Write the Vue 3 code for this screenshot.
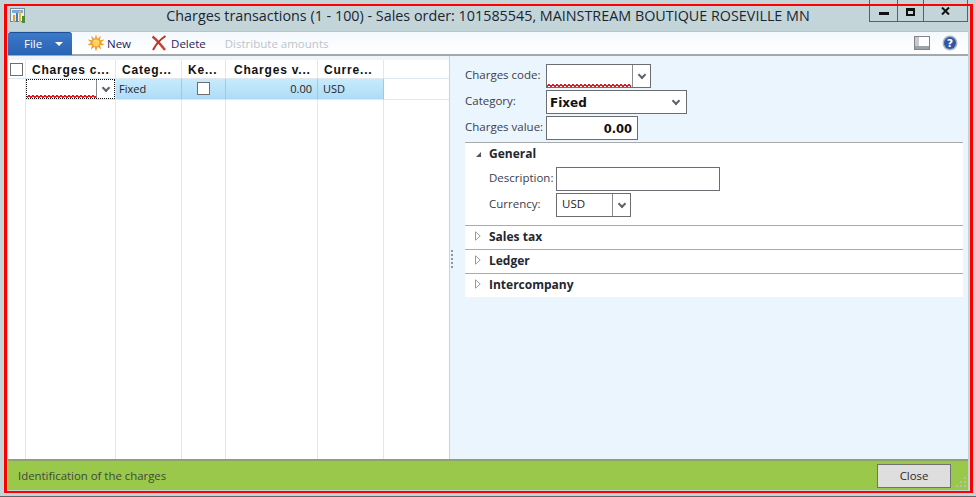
<template>
  <div class="window">
    <!-- Title bar -->
    <header class="titlebar">
      <svg class="app-icon" width="16" height="16" viewBox="0 0 16 16">
        <rect x="0.5" y="0.5" width="14" height="13" fill="#e8f0f6" stroke="#7a8a96" />
        <rect x="2" y="2" width="11" height="3" fill="#7fa8d8" />
        <rect x="3" y="7" width="2" height="7" fill="#e8a020" />
        <rect x="6" y="5" width="2" height="9" fill="#3f7fc0" />
        <rect x="9" y="3" width="2" height="11" fill="#e0c030" />
        <rect x="12" y="8" width="3" height="7" fill="#4a8a40" />
      </svg>
      <span class="title">Charges transactions (1 - 100) - Sales order: 101585545, MAINSTREAM BOUTIQUE ROSEVILLE MN</span>
      <div class="win-buttons">
        <div class="win-btn btn-min"><span class="min-bar"></span></div>
        <div class="win-btn btn-max"><span class="max-box"></span></div>
        <div class="win-btn btn-close">
          <svg width="9" height="8" viewBox="0 0 9 8">
            <path d="M1 0.5 L8 7.5 M8 0.5 L1 7.5" stroke="#111" stroke-width="2" fill="none" />
          </svg>
        </div>
      </div>
    </header>

    <!-- Toolbar -->
    <div class="toolbar">
      <button class="file-btn">File<span class="file-caret"></span></button>
      <div class="tool tool-new">
        <svg width="18" height="18" viewBox="0 0 18 18">
          <path d="M9 0.5 L10.4 5 L13.8 1.8 L12.8 6.2 L17.4 5.4 L14 8.6 L17.6 11 L13 11.2 L14.2 15.6 L10.6 12.8 L9 17.4 L7.4 12.8 L3.8 15.6 L5 11.2 L0.4 11 L4 8.6 L0.6 5.4 L5.2 6.2 L4.2 1.8 L7.6 5 Z" fill="#f0a030" />
          <circle cx="9" cy="8.8" r="3.4" fill="#fbd667" />
        </svg>
        <span>New</span>
      </div>
      <div class="tool tool-delete">
        <svg width="16" height="16" viewBox="0 0 16 16">
          <path d="M1.5 1.5 C6 5 10 10 14 15" stroke="#c8402c" stroke-width="2.4" fill="none" />
          <path d="M14.5 1 C10 4 5 9 2 15" stroke="#b83424" stroke-width="2" fill="none" />
        </svg>
        <span>Delete</span>
      </div>
      <div class="tool tool-disabled">Distribute amounts</div>
      <div class="toolbar-right">
        <svg width="16" height="14" viewBox="0 0 16 14">
          <rect x="0.5" y="0.5" width="15" height="13" fill="#fff" stroke="#808488" />
          <rect x="1" y="10" width="14" height="3" fill="#9aa4a8" />
          <rect x="1" y="1" width="4" height="9" fill="#c4ccd0" />
        </svg>
        <svg width="16" height="16" viewBox="0 0 16 16">
          <circle cx="8" cy="8" r="7.5" fill="#aab4c0" />
          <circle cx="8" cy="8" r="6" fill="#2f55a8" />
          <text x="8" y="12" class="help-mark" text-anchor="middle">?</text>
        </svg>
      </div>
    </div>

    <div class="body">
      <!-- Grid on the left -->
      <section class="grid-pane">
        <div class="grid">
          <div v-for="col in columns" :key="col.key" class="col" :class="col.key" :style="{ width: col.width + 'px' }">
            <div class="col-head">
              <span v-if="col.key === 'c-mark'" class="check"></span>
              <template v-else>{{ col.title }}</template>
            </div>
            <div class="col-cell" :class="{ selected: col.selected }">
              <div v-if="col.key === 'c-code'" class="code-cell">
                <div class="code-input">
                  <svg class="squiggle" width="70" height="3" shape-rendering="crispEdges">
                    <polyline :points="squiggle(70)" fill="none" stroke="#e8181c" />
                  </svg>
                </div>
                <span class="drop"><i class="chev"></i></span>
              </div>
              <span v-else-if="col.key === 'c-keep'" class="check"></span>
              <template v-else>{{ col.value }}</template>
            </div>
            <div class="col-fill"></div>
          </div>
        </div>
      </section>

      <div class="splitter"><span class="grip"></span></div>

      <!-- Detail form on the right -->
      <section class="detail">
        <div class="form-top">
          <div class="field">
            <label>Charges code:</label>
            <div class="input code-box">
              <div class="input-main">
                <svg class="squiggle" width="85" height="3" shape-rendering="crispEdges">
                  <polyline :points="squiggle(85)" fill="none" stroke="#e8181c" />
                </svg>
              </div>
              <span class="drop bar"><i class="chev"></i></span>
            </div>
          </div>
          <div class="field">
            <label>Category:</label>
            <div class="input cat-box strong">
              <div class="input-main">Fixed</div>
              <span class="drop"><i class="chev"></i></span>
            </div>
          </div>
          <div class="field">
            <label>Charges value:</label>
            <div class="input val-box strong"><div class="input-main right">0.00</div></div>
          </div>
        </div>

        <div class="sections">
          <div class="section open">
            <div class="section-head"><i class="tri-open"></i>General</div>
            <div class="sub-field">
              <label>Description:</label>
              <div class="input desc-box"></div>
            </div>
            <div class="sub-field">
              <label>Currency:</label>
              <div class="input cur-box">
                <div class="input-main cur-text">USD</div>
                <span class="drop bar"><i class="chev"></i></span>
              </div>
            </div>
          </div>
          <div v-for="name in closedSections" :key="name" class="section closed">
            <div class="section-head">
              <svg class="tri-closed" width="6" height="10" viewBox="0 0 6 10">
                <path d="M0.5 0.8 L5.2 5 L0.5 9.2 Z" fill="#fff" stroke="#9a9a9e" />
              </svg>
              {{ name }}
            </div>
          </div>
        </div>
      </section>
    </div>

    <!-- Status bar -->
    <footer class="status">
      <span>Identification of the charges</span>
      <button class="close-btn">Close</button>
      <span class="resize-grip"></span>
    </footer>

    <!-- Red annotation frame drawn over the screenshot -->
    <div class="red-frame"></div>
  </div>
</template>

<script setup>
const columns = [
  { key: 'c-mark', width: 18, title: '', value: '' },
  { key: 'c-code', width: 90, title: 'Charges c...', value: '' },
  { key: 'c-cat', width: 66, title: 'Categ...', value: 'Fixed', selected: true },
  { key: 'c-keep', width: 44, title: 'Ke...', value: '', selected: true },
  { key: 'c-val', width: 92, title: 'Charges v...', value: '0.00', selected: true },
  { key: 'c-cur', width: 66, title: 'Curre...', value: 'USD', selected: true },
  { key: 'c-rest', width: 65, title: '', value: '' }
]

const closedSections = ['Sales tax', 'Ledger', 'Intercompany']

// zigzag for the "mandatory field" underline
function squiggle(width) {
  const pts = []
  for (let x = 0; x <= width; x += 2) {
    pts.push(`${x},${x % 4 === 0 ? 2.5 : 0.5}`)
  }
  return pts.join(' ')
}
</script>

<style>
html, body {
  margin: 0;
  background: #c4d5da;
}
</style>

<style scoped>
.window {
  position: relative;
  box-sizing: border-box;
  width: 976px;
  height: 497px;
  padding: 0 8px 6px;
  background: #c4d5da;
  border-bottom: 1px solid #5c666c;
  display: flex;
  flex-direction: column;
  font-family: "Open Sans", "Noto Sans", sans-serif;
  font-size: 11.5px;
  color: #222;
  overflow: hidden;
}

/* Title bar */
.titlebar {
  position: relative;
  height: 31px;
  flex: none;
  display: flex;
  align-items: center;
  justify-content: center;
  box-sizing: border-box;
}
.app-icon {
  position: absolute;
  left: 2px;
  top: 8px;
}
.title {
  font-size: 14.35px;
  color: #1a2530;
  white-space: nowrap;
}
.win-buttons {
  position: absolute;
  right: 0;
  top: 0;
  display: flex;
  height: 22px;
  box-sizing: border-box;
  border: 1px solid #566068;
  border-top: none;
}
.win-btn {
  display: flex;
  justify-content: center;
  box-sizing: border-box;
}
.btn-min { width: 28px; border-right: 1px solid #566068; padding-top: 12px; }
.btn-max { width: 26px; border-right: 1px solid #566068; padding-top: 8px; }
.btn-close { width: 43px; padding-top: 7px; }
.min-bar { width: 10px; height: 3px; background: #111; }
.max-box { width: 5px; height: 3px; border: 2px solid #111; border-top-width: 3px; }

/* Toolbar */
.toolbar {
  height: 25px;
  flex: none;
  display: flex;
  align-items: center;
  background: linear-gradient(#f4f9fd, #fff);
  border-bottom: 2px solid #a4a8aa;
  border-top: 1px solid #b4c4cc;
  box-sizing: border-box;
}
.file-btn {
  width: 64px;
  height: 23px;
  padding: 0 0 0 16px;
  border: none;
  border-top: 1px solid #1d4f98;
  border-radius: 3px 3px 0 0;
  background: linear-gradient(#3c7ac8, #2a62b4);
  color: #fff;
  font: inherit;
  font-size: 11.5px;
  text-align: left;
  display: flex;
  align-items: center;
}
.file-caret {
  margin-left: 13px;
  border-left: 4px solid transparent;
  border-right: 4px solid transparent;
  border-top: 4px solid #fff;
}
.tool {
  display: flex;
  align-items: center;
  gap: 2px;
  color: #24245c;
  font-size: 11.5px;
}
.tool-new { margin-left: 15px; }
.tool-delete { margin-left: 20px; gap: 4px; }
.tool-disabled { margin-left: 19px; color: #c0c4c8; }
.toolbar-right {
  margin-left: auto;
  margin-right: 10px;
  display: flex;
  align-items: center;
  gap: 12px;
}
.help-mark {
  font-family: "DejaVu Sans", sans-serif;
  font-size: 11px;
  font-weight: 700;
  fill: #fff;
}

/* Main area */
.body {
  flex: 1;
  display: flex;
  min-height: 0;
  background: #ebf5fd;
}
.grid-pane {
  width: 441px;
  flex: none;
  padding-top: 4px;
  box-sizing: border-box;
  background: linear-gradient(#eef6fc 4px, #fff 4px);
}
.grid {
  display: flex;
  height: 100%;
}
.col {
  display: flex;
  flex-direction: column;
  flex: none;
  box-sizing: border-box;
}
.col-head {
  height: 19px;
  box-sizing: border-box;
  padding-left: 6px;
  font-family: "Liberation Sans", Arial, sans-serif;
  font-weight: 700;
  font-size: 12px;
  letter-spacing: 0.8px;
  line-height: 20px;
  color: #111;
  white-space: nowrap;
  background: #fff;
  border-right: 1px solid #e0e8ef;
  border-bottom: 1px solid #e0e8ef;
}
.col-cell {
  height: 21px;
  box-sizing: border-box;
  padding: 0 3px;
  line-height: 19px;
  border-right: 1px solid #e0e8ef;
  border-bottom: 1px solid #e0e8ef;
  white-space: nowrap;
  color: #1d1d28;
  font-size: 11px;
}
.col-cell.selected {
  background: linear-gradient(#c8eafc, #aedcf6);
  border-right-color: #8cd0f2;
}
.col-fill {
  flex: 1;
  border-right: 1px solid #e0e8ef;
}
.c-mark .col-head { padding: 3px 0 0 2px; }
.c-mark .col-cell { border-bottom: none; }
.c-code .col-cell { padding: 0; }
.c-keep .col-cell { text-align: center; padding-top: 3px; }
.c-val .col-head { padding-left: 8px; }
.c-val .col-cell { text-align: right; padding-right: 5px; }
.c-cur .col-cell { padding-left: 5px; }
.c-rest .col-head,
.c-rest .col-cell,
.c-rest .col-fill { border-right: none; }

.check {
  display: block;
  width: 11px;
  height: 11px;
  border: 1px solid #6e6e6e;
  background: #fff;
}
.c-keep .check { margin: 0 auto; }

.code-cell {
  display: flex;
  height: 20px;
  border: 1px dotted #111;
  background: #fff;
  box-sizing: border-box;
}
.code-input {
  flex: 1;
  position: relative;
  overflow: hidden;
}
.squiggle {
  position: absolute;
  left: 0;
  bottom: 0;
  display: block;
}
.drop {
  flex: none;
  width: 17px;
  display: flex;
  align-items: center;
  justify-content: center;
  border-left: 1px solid #8a8a8a;
}
.chev {
  display: block;
  width: 4px;
  height: 4px;
  margin-top: -3px;
  border-right: 2px solid #59646c;
  border-bottom: 2px solid #59646c;
  transform: rotate(45deg);
}

.splitter {
  flex: none;
  width: 1px;
  background: #c2d3e4;
  position: relative;
}
.grip {
  position: absolute;
  left: 2px;
  top: 194px;
  width: 2px;
  height: 18px;
  background: repeating-linear-gradient(#8c979e 0 2px, transparent 2px 4px);
}

/* Right side form */
.detail {
  flex: 1;
  min-width: 0;
  padding: 8px 5px 0 15px;
}
.form-top {
  display: flex;
  flex-direction: column;
  gap: 2px;
}
.field {
  display: flex;
  align-items: flex-start;
  height: 24px;
}
.field label {
  width: 81px;
  flex: none;
  line-height: 21px;
  color: #3d3d4a;
}
.input {
  display: flex;
  box-sizing: border-box;
  height: 100%;
  background: #fff;
  border: 1px solid #6a6e72;
}
.input-main {
  flex: 1;
  position: relative;
  padding: 0 3px;
  min-width: 0;
}
.strong .input-main {
  font-family: "DejaVu Sans", sans-serif;
  font-weight: 700;
  font-size: 12px;
  line-height: 24px;
  color: #111;
}
.right { text-align: right; }
.code-box { width: 105px; }
.cat-box { width: 141px; }
.cat-box .drop { border-left: none; width: 21px; }
.val-box { width: 92px; }
.val-box .input-main { padding-right: 5px; font-size: 11.5px; }

.sections {
  background: #fff;
  margin-top: 2px;
  border-top: 1px solid #a8aaac;
}
.section {
  box-sizing: border-box;
}
.section.open { height: 82px; }
.section.closed {
  height: 24px;
  border-top: 1px solid #a8aaac;
}
.section-head {
  display: flex;
  align-items: center;
  height: 20px;
  padding-left: 24px;
  position: relative;
  font-weight: 700;
  font-size: 12px;
  color: #222730;
}
.section.closed .section-head { height: 20px; }
.tri-open {
  position: absolute;
  left: 11px;
  top: 50%;
  width: 0;
  height: 0;
  margin-top: -1px;
  border-bottom: 5px solid #56565a;
  border-left: 5px solid transparent;
}
.tri-closed {
  position: absolute;
  left: 10px;
  top: 50%;
  margin-top: -5px;
}
.sub-field {
  display: flex;
  height: 24px;
  margin-top: 2px;
  padding-left: 24px;
}
.section-head + .sub-field { margin-top: 4px; }
.sub-field label {
  width: 67px;
  flex: none;
  line-height: 21px;
  color: #3d3d4a;
}
.desc-box { width: 164px; }
.cur-box { width: 75px; }
.cur-text { padding-left: 5px; line-height: 20px; color: #222; }

/* Status bar */
.status {
  height: 31px;
  flex: none;
  display: flex;
  align-items: center;
  justify-content: space-between;
  box-sizing: border-box;
  padding: 0 17px 0 10px;
  background: #9ac84a;
  border-top: 2px solid #8ea170;
  color: #3f4a38;
  font-size: 11.4px;
  position: relative;
}
.close-btn {
  width: 74px;
  height: 24px;
  background: #dedede;
  border: 1px solid #727272;
  font: inherit;
  color: #2a2a2a;
  padding: 0;
}
.resize-grip {
  position: absolute;
  right: 2px;
  bottom: 3px;
  width: 11px;
  height: 11px;
  background: radial-gradient(circle, #b8c4a8 1px, transparent 1.2px) 0 0 / 4px 4px;
  clip-path: polygon(100% 0, 100% 100%, 0 100%);
}

.red-frame {
  position: absolute;
  left: 4px;
  top: 4px;
  width: 969px;
  height: 489px;
  box-sizing: border-box;
  border: solid #f00;
  border-width: 2px 3px;
  pointer-events: none;
}
</style>
